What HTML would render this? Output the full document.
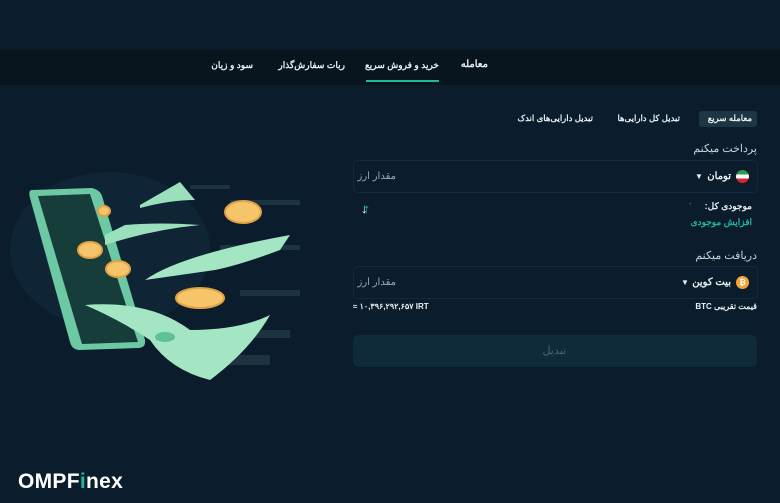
<!DOCTYPE html>
<html><head><meta charset="utf-8"><style>
body{margin:0;width:780px;height:503px;background:#0b1c2c;font-family:"Liberation Sans","Noto Sans CJK SC",sans-serif;color:#e8eef2;position:relative;overflow:hidden}
.a{position:absolute;white-space:nowrap}
.r{position:absolute;white-space:nowrap;direction:rtl}
.nav{position:absolute;left:0;top:50px;width:780px;height:35px;background:#08151f}
.tab{font-size:9px;font-weight:bold;top:60px}
.inp{position:absolute;left:353px;width:403px;height:31px;border:1px solid #15293a;border-radius:5px;background:#0b1d2c}
</style></head><body>
<div class="nav"></div>
<div class="r tab" style="right:292px;font-size:10px;top:59px">معامله</div>
<div class="r tab" style="right:341px">خرید و فروش سریع</div>
<div style="position:absolute;left:366px;top:80px;width:73px;height:2px;background:#1fb89a"></div>
<div class="r tab" style="right:435px">ربات سفارش‌گذار</div>
<div class="r tab" style="right:527px">سود و زیان</div>

<div style="position:absolute;left:699px;top:111px;width:58px;height:16px;background:#1c3644;border-radius:3px"></div>
<div class="r" style="right:28px;top:113px;font-size:8.5px;font-weight:bold">معامله سریع</div>
<div class="r" style="right:100px;top:113px;font-size:8.5px;font-weight:bold">تبدیل کل دارایی‌ها</div>
<div class="r" style="right:187px;top:113px;font-size:8.5px;font-weight:bold">تبدیل دارایی‌های اندک</div>

<div class="r" style="right:23px;top:142px;font-size:11px;color:#c9d3da">پرداخت میکنم</div>
<div class="inp" style="top:160px"></div>
<div style="position:absolute;left:736px;top:170px;width:13px;height:13px;border-radius:50%;background:linear-gradient(#2a9c4a 33%,#fff 33% 66%,#d8262c 66%)"></div>
<div class="r" style="right:49px;top:171px;font-size:10px;font-weight:bold">تومان</div>
<div class="a" style="left:695px;top:172px;font-size:8px">▼</div>
<div class="r" style="right:384px;top:171px;font-size:10px;color:#9aa7b1">مقدار ارز</div>
<div class="a" style="left:361px;top:201px;font-size:13px;font-weight:bold;color:#fff">↓<span style="margin-left:-4px;color:#1fb89a">↑</span></div>
<div class="r" style="right:28px;top:201px;font-size:9px;font-weight:bold">موجودی کل:</div>
<div class="a" style="left:688px;top:199px;font-size:8px;color:#aab">٠</div>
<div class="r" style="right:28px;top:217px;font-size:9px;font-weight:bold;color:#1fb89a">افزایش موجودی</div>

<div class="r" style="right:23px;top:249px;font-size:11px;color:#c9d3da">دریافت میکنم</div>
<div class="inp" style="top:266px"></div>
<div style="position:absolute;left:736px;top:276px;width:13px;height:13px;border-radius:50%;background:#f3a33a;color:#fff;font-size:8px;text-align:center;line-height:13px;font-weight:bold">₿</div>
<div class="r" style="right:49px;top:277px;font-size:10px;font-weight:bold">بیت کوین</div>
<div class="a" style="left:681px;top:278px;font-size:8px">▼</div>
<div class="r" style="right:384px;top:277px;font-size:10px;color:#9aa7b1">مقدار ارز</div>
<div class="r" style="right:23px;top:302px;font-size:8px;font-weight:bold">قیمت تقریبی BTC</div>
<div class="a" style="left:353px;top:302px;font-size:8px;font-weight:bold;direction:ltr">≈ ۱۰,۳۹۶,۲۹۲,۶۵۷ IRT</div>

<div style="position:absolute;left:353px;top:335px;width:404px;height:32px;background:#0f2a3a;border-radius:5px"></div>
<div class="r" style="right:214px;top:344px;font-size:11px;color:#4b6474">تبدیل</div>

<svg class="a" style="left:0;top:160px" width="320" height="260" viewBox="0 160 320 260">
<ellipse cx="110" cy="250" rx="100" ry="78" fill="#0f2535"/>
<g fill="#1d3340">
<rect x="190" y="185" width="40" height="4"/><rect x="230" y="200" width="70" height="5"/><rect x="220" y="245" width="80" height="5"/><rect x="240" y="290" width="60" height="6"/><rect x="220" y="330" width="70" height="8"/><rect x="210" y="355" width="60" height="10"/>
</g>
<path d="M32 190 L92 188 Q100 190 102 196 L145 340 Q146 348 138 348 L80 350 Q72 350 70 342 L30 198 Q28 190 32 190Z" fill="#6dc9a3"/>
<path d="M38 196 L90 194 L138 342 L82 344Z" fill="#173d3a"/>
<path d="M140 205 L180 182 L195 200 Q170 200 140 208Z" fill="#9be0bd"/>
<path d="M105 235 L125 225 Q160 222 200 225 Q150 230 105 245Z" fill="#9be0bd"/>
<path d="M145 280 Q180 255 290 235 L280 250 Q240 265 215 270 Q180 275 145 280Z" fill="#a4e6c3"/>
<path d="M85 305 Q150 300 190 330 Q240 330 270 315 Q250 350 210 380 Q170 370 150 340 Q120 320 85 305Z" fill="#a4e6c3"/>
<ellipse cx="165" cy="337" rx="10" ry="5" fill="#5fbf95"/>
<g fill="#f6c46a" stroke="#e0a245" stroke-width="2">
<ellipse cx="243" cy="212" rx="18" ry="11"/><ellipse cx="200" cy="298" rx="24" ry="10"/><ellipse cx="118" cy="269" rx="12" ry="8"/><ellipse cx="90" cy="250" rx="12" ry="8"/><ellipse cx="104" cy="211" rx="6" ry="5"/>
</g>
</svg>
<div class="a" style="left:18px;top:470px;font-size:21px;font-weight:bold;color:#fff;letter-spacing:0.3px">OMPF<span style="color:#1fb89a">i</span>nex</div>
</body></html>
